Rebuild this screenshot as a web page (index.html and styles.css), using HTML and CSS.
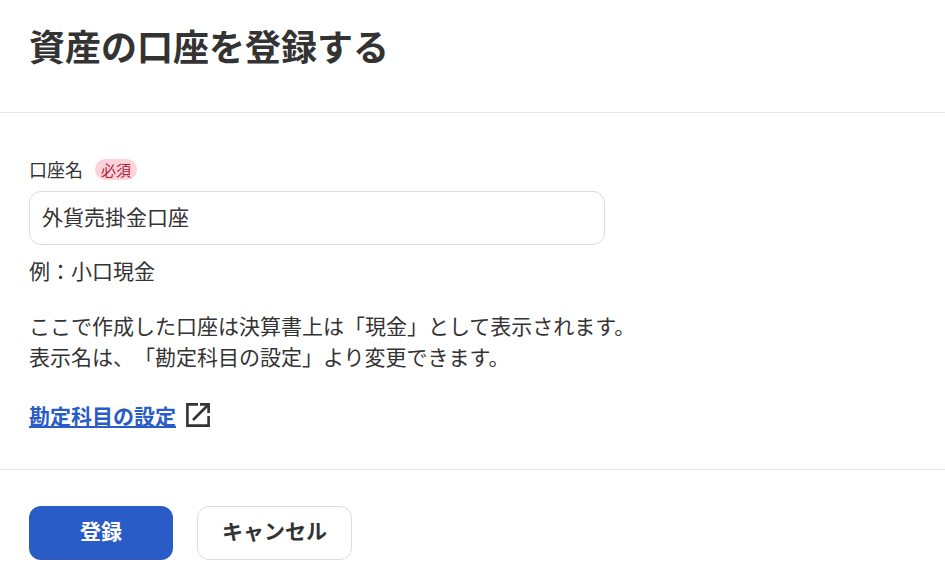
FILE: index.html
```html
<!DOCTYPE html>
<html lang="ja">
<head>
    <meta charset="UTF-8">
    <meta name="viewport" content="width=device-width, initial-scale=1.0">
    <title>資産の口座を登録する</title>
    <link rel="stylesheet" href="styles.css">
</head>
<body>
    <header class="page-header">
        <h1>資産の口座を登録する</h1>
    </header>

    <main class="page-body">
        <div class="field-label">
            <label for="accountName">口座名</label>
            <span class="badge">必須</span>
        </div>
        <input type="text" id="accountName" class="text-input" value="外貨売掛金口座">
        <p class="hint">例：小口現金</p>
        <p class="note">ここで作成した口座は決算書上は「現金」として表示されます。<br>表示名は、「勘定科目の設定」より変更できます。</p>
        <div class="link-row">
            <a href="#" class="link">勘定科目の設定</a>
            <svg class="link-icon" width="24" height="24" viewBox="0 0 24 24" fill="none" stroke="#333" stroke-width="2.6">
                <path d="M12 1.4H1.4V22.6H22.6V13"/>
                <path d="M7 17L22 2"/>
                <path d="M14 1.4H22.6V10"/>
            </svg>
        </div>
    </main>

    <footer class="page-footer">
        <button type="button" class="btn btn-primary"><span class="btn-label">登録</span></button>
        <button type="button" class="btn btn-secondary"><span class="btn-label">キャンセル</span></button>
    </footer>
</body>
</html>
```

FILE: styles.css
```css
* {
    margin: 0;
    padding: 0;
    box-sizing: border-box;
}

body {
    font-family: "Noto Sans CJK JP", "Noto Sans", sans-serif;
    color: #333;
    background-color: white;
    text-spacing-trim: space-all;
}

.page-header {
    height: 113px;
    padding: 19px 29px 0;
    border-bottom: 1px solid #e5e5e5;
}

h1 {
    font-size: 36px;
    line-height: 52px;
    font-weight: 700;
}

.page-body {
    height: 357px;
    padding: 43px 29px 0;
    border-bottom: 1px solid #e5e5e5;
}

.field-label {
    display: flex;
    align-items: center;
    gap: 12px;
    height: 26px;
    font-size: 18px;
    margin-bottom: 9px;
}

.badge {
    background-color: #fbd3da;
    color: #b3203c;
    font-size: 15px;
    line-height: 21px;
    padding: 0 6px;
    border-radius: 11px;
}

.text-input {
    display: block;
    width: 576px;
    height: 54px;
    padding: 0 12px 5px;
    border: 1px solid #dcdcdc;
    border-radius: 12px;
    font-family: inherit;
    font-size: 21px;
    color: #333;
}

.hint {
    font-size: 21px;
    line-height: 30px;
    margin-top: 10px;
}

.note {
    font-size: 21px;
    line-height: 31px;
    margin-top: 25px;
}

.link-row {
    display: flex;
    align-items: center;
    gap: 10px;
    margin-top: 28px;
}

.link {
    font-size: 21px;
    font-weight: 700;
    line-height: 30px;
    color: #2a5cc8;
}

.page-footer {
    display: flex;
    gap: 24px;
    padding: 36px 29px 0;
}

.btn {
    height: 54px;
    border-radius: 12px;
    font-family: inherit;
    font-size: 21px;
    font-weight: 700;
    cursor: pointer;
}

.btn-label {
    display: block;
    margin-top: -6px;
}

.btn-primary {
    width: 144px;
    background-color: #2a5cc8;
    color: white;
    border: none;
}

.btn-secondary {
    width: 155px;
    background-color: white;
    color: #333;
    border: 1px solid #dcdcdc;
}
```
